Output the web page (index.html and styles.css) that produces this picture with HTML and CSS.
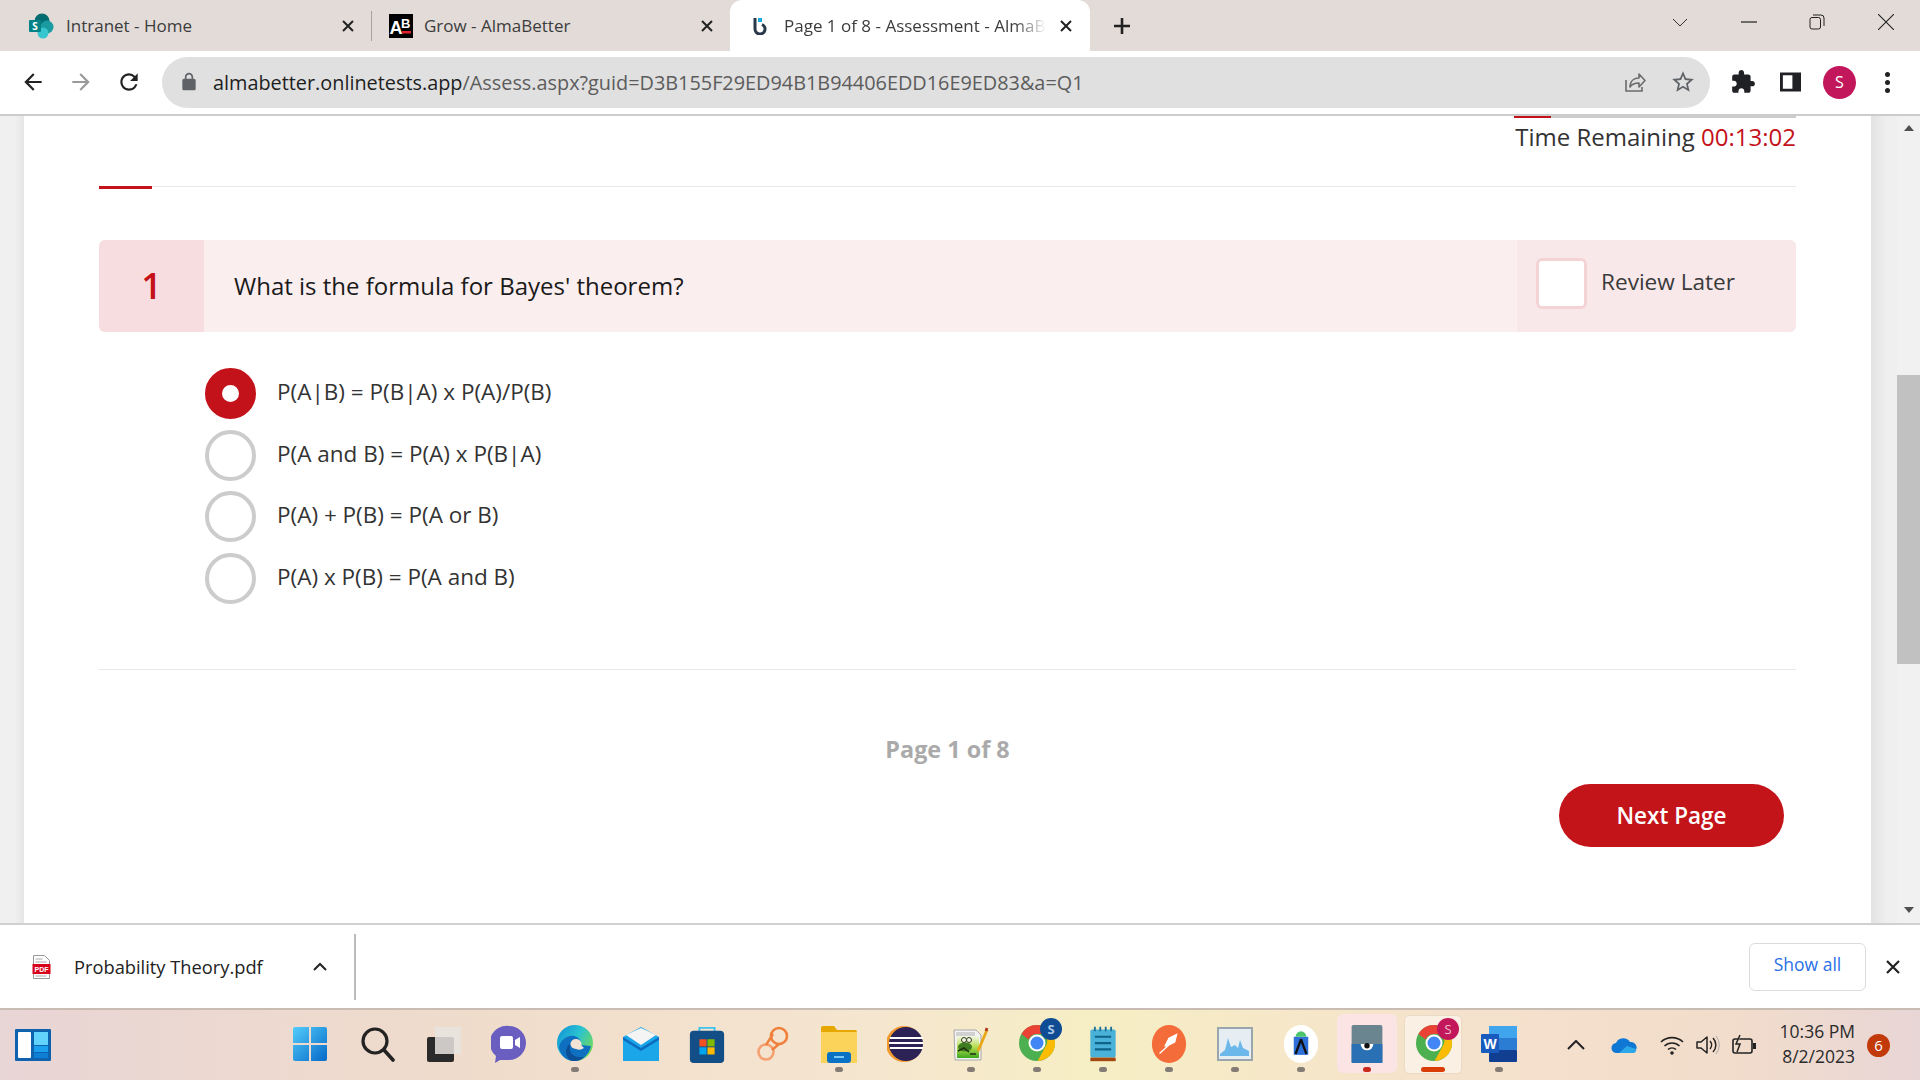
FILE: index.html
```html
<!DOCTYPE html>
<html>
<head>
  <meta charset="utf-8">
  <title>Page 1 of 8 - Assessment - AlmaBetter</title>
  <link rel="stylesheet" href="styles.css">
</head>
<body>
<div class="browser">

  <div class="tabstrip">
    <div class="tab tab-first">
      <svg class="favicon" viewBox="0 0 26 26">
        <circle cx="14" cy="8" r="7.5" fill="#036c70"/>
        <circle cx="19" cy="14" r="6.5" fill="#1a9ba1"/>
        <circle cx="15" cy="20" r="5.5" fill="#37c6d0"/>
        <rect x="1" y="7" width="12" height="12" rx="1" fill="#038387"/>
        <text x="7" y="16.5" class="fav-s">S</text>
      </svg>
      <span class="tab-title">Intranet - Home</span>
      <svg class="tab-close" viewBox="0 0 12 12"><path d="M1 1l10 10M11 1L1 11" stroke="#222" stroke-width="2"/></svg>
    </div>
    <div class="tab-sep"></div>
    <div class="tab tab-second">
      <svg class="favicon" viewBox="0 0 24 24">
        <rect width="24" height="24" fill="#000"/>
        <text x="0.5" y="20" class="fav-a">A</text>
        <text x="12" y="14" class="fav-b">B</text>
        <rect x="13" y="17" width="9" height="2.5" fill="#e0202c"/>
      </svg>
      <span class="tab-title">Grow - AlmaBetter</span>
      <svg class="tab-close" viewBox="0 0 12 12"><path d="M1 1l10 10M11 1L1 11" stroke="#222" stroke-width="2"/></svg>
    </div>
    <div class="tab tab-active">
      <svg class="favicon favicon-small" viewBox="0 0 16 18">
        <path d="M3 1 L3 12 A5 5 0 1 0 10 7.500" fill="none" stroke="#27394a" stroke-width="3"/>
        <rect x="6" y="1" width="4" height="4" fill="#1ea7dc"/>
      </svg>
      <span class="tab-title tab-title-fade">Page 1 of 8 - Assessment - AlmaBetter</span>
      <svg class="tab-close" viewBox="0 0 12 12"><path d="M1 1l10 10M11 1L1 11" stroke="#222" stroke-width="2"/></svg>
    </div>
    <svg class="new-tab" viewBox="0 0 20 20"><path d="M10 2v16M2 10h16" stroke="#222" stroke-width="2.6"/></svg>
    <div class="window-controls">
      <svg viewBox="0 0 16 16"><path d="M1 5l7 7 7-7" fill="none" stroke="#333" stroke-width="1"/></svg>
      <svg viewBox="0 0 16 16"><path d="M0 8h16" stroke="#222" stroke-width="1.2"/></svg>
      <svg viewBox="0 0 16 16"><rect x="1" y="3.5" width="10.5" height="11.5" rx="2" fill="none" stroke="#222"/><path d="M4 1h8a3 3 0 0 1 3 3v8" fill="none" stroke="#222"/></svg>
      <svg viewBox="0 0 16 16"><path d="M0 0l16 16M16 0L0 16" stroke="#222" stroke-width="1.1"/></svg>
    </div>
  </div>

  <div class="toolbar">
    <svg class="nav-icon" viewBox="0 0 24 24"><path fill="#222" d="M20 11H7.83l5.59-5.59L12 4l-8 8 8 8 1.41-1.41L7.83 13H20v-2z"/></svg>
    <svg class="nav-icon" viewBox="0 0 24 24"><path fill="#9a9a9a" d="M12 4l-1.41 1.41L16.17 11H4v2h12.17l-5.58 5.59L12 20l8-8z"/></svg>
    <svg class="nav-icon" viewBox="0 0 24 24"><path fill="#222" d="M17.65 6.35A7.958 7.958 0 0 0 12 4c-4.42 0-7.99 3.58-7.99 8s3.57 8 7.99 8c3.73 0 6.84-2.55 7.73-6h-2.08A5.99 5.99 0 0 1 12 18c-3.31 0-6-2.69-6-6s2.69-6 6-6c1.66 0 3.14.69 4.22 1.78L13 11h7V4l-2.35 2.35z"/></svg>
    <div class="urlbar">
      <svg class="lock" viewBox="0 0 24 24"><path fill="#5f6368" d="M18 8h-1V6c0-2.76-2.24-5-5-5S7 3.24 7 6v2H6c-1.1 0-2 .9-2 2v10c0 1.1.9 2 2 2h12c1.1 0 2-.9 2-2V10c0-1.1-.9-2-2-2zM9 6c0-1.66 1.34-3 3-3s3 1.34 3 3v2H9V6z"/></svg>
      <span class="url"><span class="url-host">almabetter.onlinetests.app</span>/Assess.aspx?guid=D3B155F29ED94B1B94406EDD16E9ED83&amp;a=Q1</span>
      <svg class="share" viewBox="0 0 24 24"><path d="M3 10v11h16v-4" fill="none" stroke="#6b6b6b" stroke-width="1.6"/><path d="M7 17c0-6 4-9 9-9V4l6 6.5-6 6.5v-4c-4 0-7 1-9 4z" fill="none" stroke="#6b6b6b" stroke-width="1.6" stroke-linejoin="round"/></svg>
      <svg class="star" viewBox="0 0 24 24"><path fill="#5f6368" d="M22 9.24l-7.19-.62L12 2 9.19 8.63 2 9.24l5.46 4.73L5.82 21 12 17.27 18.18 21l-1.63-7.03L22 9.24zM12 15.4l-3.76 2.27 1-4.28-3.32-2.88 4.38-.38L12 6.1l1.71 4.04 4.38.38-3.32 2.88 1 4.28L12 15.4z"/></svg>
    </div>
    <svg class="ext-icon" viewBox="0 0 24 24"><path fill="#202124" d="M20.5 11H19V7c0-1.1-.9-2-2-2h-4V3.5C13 2.12 11.88 1 10.5 1S8 2.12 8 3.5V5H4c-1.1 0-1.99.9-1.99 2v3.8H3.5c1.49 0 2.7 1.21 2.7 2.7s-1.21 2.7-2.7 2.7H2V20c0 1.1.9 2 2 2h3.8v-1.5c0-1.49 1.21-2.7 2.7-2.7 1.49 0 2.7 1.21 2.7 2.7V22H17c1.1 0 2-.9 2-2v-4h1.5c1.38 0 2.5-1.12 2.5-2.5S21.88 11 20.5 11z"/></svg>
    <svg class="panel-icon" viewBox="0 0 22 20"><path fill="#202124" fill-rule="evenodd" d="M0 0h22v20H0zM3 3v14h10V3z"/></svg>
    <div class="avatar">S</div>
    <div class="kebab"><i></i><i></i><i></i></div>
  </div>

  <div class="viewport">
    <div class="gutter gutter-left"></div>
    <main class="page">
      <div class="timer-box">
        <div class="timer-bar"><div class="timer-fill"></div></div>
        <div class="timer-text">Time Remaining <span class="timer-value">00:13:02</span></div>
      </div>
      <div class="section-rule"><div class="section-rule-mark"></div></div>

      <div class="question">
        <div class="question-num">1</div>
        <div class="question-text">What is the formula for Bayes' theorem?</div>
        <label class="review">
          <span class="review-box"></span>
          <span class="review-text">Review Later</span>
        </label>
      </div>

      <ul class="options">
        <li class="option selected"><span class="radio"></span><span class="option-text">P(A|B) = P(B|A) x P(A)/P(B)</span></li>
        <li class="option"><span class="radio"></span><span class="option-text">P(A and B) = P(A) x P(B|A)</span></li>
        <li class="option"><span class="radio"></span><span class="option-text">P(A) + P(B) = P(A or B)</span></li>
        <li class="option"><span class="radio"></span><span class="option-text">P(A) x P(B) = P(A and B)</span></li>
      </ul>

      <div class="page-footer">
        <div class="page-count">Page 1 of 8</div>
        <div class="next-row"><button class="next-btn">Next Page</button></div>
      </div>
    </main>
    <div class="gutter gutter-right"></div>
    <div class="scrollbar">
      <div class="scroll-up"></div>
      <div class="scroll-thumb"></div>
      <div class="scroll-down"></div>
    </div>
  </div>

  <div class="downloads">
    <div class="download-item">
      <svg class="pdf-icon" viewBox="0 0 18 24">
        <path d="M1 .5h11l5 5v18H1z" fill="#fff" stroke="#999"/>
        <path d="M3 4h7M3 7h11M3 21h11" stroke="#aaa"/>
        <rect x="0" y="9" width="18" height="10" fill="#d8021a"/>
        <text x="9" y="17" class="pdf-label">PDF</text>
      </svg>
      <span class="download-name">Probability Theory.pdf</span>
      <svg class="download-chevron" viewBox="0 0 14 9"><path d="M1 8l6-6 6 6" fill="none" stroke="#222" stroke-width="2"/></svg>
    </div>
    <div class="download-sep"></div>
    <button class="show-all">Show all</button>
    <svg class="download-close" viewBox="0 0 14 14"><path d="M1 1l12 12M13 1L1 13" stroke="#222" stroke-width="2.2"/></svg>
  </div>

  <div class="taskbar">
    <svg class="widgets" viewBox="0 0 36 32">
      <rect width="36" height="32" rx="1" fill="#0f62ad"/>
      <rect x="3" y="3" width="13" height="26" rx="1" fill="#fff"/>
      <rect x="19" y="3" width="14" height="13" fill="#62d4fb"/>
      <rect x="19" y="17" width="14" height="6" fill="#1aa0ec"/>
      <rect x="19" y="24" width="14" height="5" fill="#0d7fd4"/>
    </svg>

    <div class="task-icons">
      <div class="task">
        <svg viewBox="0 0 36 36">
          <defs><linearGradient id="win" x1="0" y1="0" x2="1" y2="1"><stop offset="0" stop-color="#52cdfb"/><stop offset="1" stop-color="#0668c8"/></linearGradient></defs>
          <path fill="url(#win)" d="M1 3a2 2 0 0 1 2-2h14v16H1zM19 1h14a2 2 0 0 1 2 2v14H19zM1 19h16v16H3a2 2 0 0 1-2-2zM19 19h16v14a2 2 0 0 1-2 2H19z"/>
        </svg>
      </div>
      <div class="task">
        <svg viewBox="0 0 36 36"><circle cx="16" cy="15" r="12" fill="none" stroke="#222" stroke-width="3.2"/><path d="M25 24l9 10" stroke="#222" stroke-width="3.6" stroke-linecap="round"/></svg>
      </div>
      <div class="task">
        <svg viewBox="0 0 36 36"><rect x="2" y="11" width="27" height="25" rx="2" fill="#2b2b2b"/><rect x="10" y="1" width="26" height="27" fill="#e8e4e0" fill-opacity=".85"/></svg>
      </div>
      <div class="task">
        <svg viewBox="0 0 36 38"><path d="M18 1a17 17 0 0 1 0 34H9l-5 3 1-7A17 17 0 0 1 18 1z" fill="#6a5fc0"/><rect x="9" y="11" width="13" height="13" rx="2" fill="#fff"/><path d="M24 15l5-3v11l-5-3z" fill="#fff"/></svg>
      </div>
      <div class="task running">
        <svg viewBox="0 0 36 38">
          <defs><linearGradient id="edge" x1="0" y1="0" x2="1" y2="0.6"><stop offset="0" stop-color="#0f8fd8"/><stop offset=".55" stop-color="#2ac3d0"/><stop offset="1" stop-color="#6fd860"/></linearGradient></defs>
          <circle cx="18" cy="18" r="18" fill="url(#edge)"/>
          <path d="M2 22c2-8 9-12 15-11 5 1 8 5 7 9l10 1c-2 9-9 15-17 15C9 36 3 30 2 22z" fill="#0f6fc0"/>
          <path d="M13 24c0 6 6 9 14 8-3 3-6 4-10 4-5 0-8-5-8-9 0-4 2-7 4-8z" fill="#0b4f96"/>
          <ellipse cx="19" cy="19" rx="5.500" ry="5" fill="#f3e3d4"/>
          <path d="M19 24a8 8 0 0 0 8-1l-4-4z" fill="#f3e3d4"/>
        </svg>
      </div>
      <div class="task">
        <svg viewBox="0 0 36 34"><path d="M0 10L18 0l18 10v24H0z" fill="#1aa6e8"/><path d="M0 10l18 11 18-11v3L18 24 0 13z" fill="#0c6cc0"/><path d="M3 8L18 1l15 7-15 10z" fill="#f4f4f4"/></svg>
      </div>
      <div class="task">
        <svg viewBox="0 0 36 40"><path d="M10 8V3h16v5" fill="none" stroke="#3cc3ee" stroke-width="2"/><rect y="6" width="36" height="34" rx="4" fill="#134f86"/><rect x="10" y="15" width="7.5" height="7.5" fill="#f25022"/><rect x="18.5" y="15" width="7.5" height="7.5" fill="#7fba00"/><rect x="10" y="23.5" width="7.5" height="7.5" fill="#00a4ef"/><rect x="18.5" y="23.5" width="7.5" height="7.5" fill="#ffb900"/></svg>
      </div>
      <div class="task">
        <svg viewBox="0 0 36 38"><circle cx="24" cy="11" r="8" fill="none" stroke="#f0813c" stroke-width="2.6"/><circle cx="11" cy="27" r="7.500" fill="none" stroke="#f4a070" stroke-width="2.6"/><path d="M24 19L17 25M18 9l-7 11" fill="none" stroke="#f0813c" stroke-width="2.400"/></svg>
      </div>
      <div class="task running">
        <svg viewBox="0 0 36 38"><path d="M0 3a2 2 0 0 1 2-2h11l3 4h18a2 2 0 0 1 2 2v31H0z" fill="#e6a800"/><rect y="7" width="36" height="31" fill="#fcd35a"/><rect x="6" y="27" width="24" height="11" rx="3" fill="#0a72c4"/><rect x="13" y="31" width="10" height="2" fill="#7cc8f4"/></svg>
      </div>
      <div class="task">
        <svg viewBox="0 0 36 38"><circle cx="17" cy="19" r="18" fill="#f29a2e"/><circle cx="19" cy="19" r="17" fill="#2c2255"/><path d="M3 13h33M2 18h34M3 23h33" stroke="#fff" stroke-width="2"/></svg>
      </div>
      <div class="task running">
        <svg viewBox="0 0 36 36">
          <defs><linearGradient id="npp" x1="0" y1="0" x2="0" y2="1"><stop offset="0" stop-color="#f4f8e8"/><stop offset=".5" stop-color="#b4dc50"/><stop offset="1" stop-color="#3ea820"/></linearGradient></defs>
          <path d="M1 4h22l5 5v25H2z" fill="#f2f2f2" stroke="#a8a8a8"/>
          <rect x="4" y="10" width="22" height="22" fill="url(#npp)"/>
          <path d="M3 9h19M3 7h19" stroke="#b0b0b0"/>
          <ellipse cx="12" cy="21" rx="7" ry="4.500" fill="#3d7d20"/>
          <circle cx="11" cy="14" r="2.500" fill="#f4f4e0" stroke="#2c3a20"/><circle cx="16" cy="14" r="2.500" fill="#f4f4e0" stroke="#2c3a20"/>
          <path d="M5 25l6-3 5 4M17 28h6" stroke="#20300f" stroke-width="1.500" fill="none"/>
          <path d="M25 25L34 4" stroke="#e8a818" stroke-width="2.800"/>
          <path d="M33 5l1-3" stroke="#b03a20" stroke-width="2.800"/>
        </svg>
      </div>
      <div class="task running">
        <svg class="chrome" viewBox="0 0 44 44">
          <circle cx="18" cy="25" r="18" fill="#4caf50"/>
          <path d="M18 7a18 18 0 0 1 15.6 9H18a9 9 0 0 0-8.4 5.5L2.4 16A18 18 0 0 1 18 7z" fill="#ea4335"/>
          <path d="M33.6 16a18 18 0 0 1-15 27l7.6-14a9 9 0 0 0-1.5-13z" fill="#fbbc05"/>
          <circle cx="18" cy="25" r="8.5" fill="#fff"/><circle cx="18" cy="25" r="6.5" fill="#4285f4"/>
          <circle cx="32" cy="11" r="11" fill="#0f4c94"/>
          <text x="32" y="15.500" class="chrome-badge badge-blue">S</text>
        </svg>
      </div>
      <div class="task running">
        <svg viewBox="0 0 36 42"><rect x="4" y="5" width="28" height="31" rx="2" fill="#4ab2d8"/><path d="M9 2v5M15 2v5M21 2v5M27 2v5" stroke="#1b6f96" stroke-width="2"/><path d="M9 13h18M9 20h18M9 27h18" stroke="#0f6288" stroke-width="2.4"/><rect x="4" y="36" width="28" height="4" fill="#a3480f"/></svg>
      </div>
      <div class="task running">
        <svg viewBox="0 0 36 40"><ellipse cx="18" cy="20" rx="18" ry="20" fill="#f36c39"/><path d="M8 30l11-10M14 22l4-8 8-4-2 8-8 4z" fill="#fff" stroke="#fff" stroke-width="1.4"/></svg>
      </div>
      <div class="task running">
        <svg viewBox="0 0 36 34"><rect x="1" y="1" width="34" height="32" fill="#e6eef4" stroke="#9aa6ae" stroke-width="2"/><path d="M3 27l5-4 3-12 3 9 4-2 3 3 2-8 3 8 6 3v5H3z" fill="#6cb8ea"/></svg>
      </div>
      <div class="task running">
        <svg viewBox="0 0 38 42"><ellipse cx="19" cy="21" rx="19" ry="21" fill="#fff"/><rect x="11" y="13" width="16" height="20" fill="#2f6fd8"/><path d="M13 13a6 6 0 0 1 12 0z" fill="#4cc46c"/><path d="M19 16l-6 16M19 16l6 16" stroke="#111" stroke-width="2.6"/></svg>
      </div>
      <div class="task task-open-app running-red">
        <svg viewBox="0 0 34 42"><rect width="34" height="42" rx="2" fill="#6a8590"/><rect y="21" width="34" height="21" fill="#2a70b4"/><path d="M10 21a7 7 0 0 0 14 0z" fill="#fff"/><circle cx="17" cy="23" r="3" fill="#111"/></svg>
      </div>
      <div class="task task-active running-orange">
        <svg class="chrome" viewBox="0 0 44 44">
          <circle cx="18" cy="25" r="18" fill="#4caf50"/>
          <path d="M18 7a18 18 0 0 1 15.6 9H18a9 9 0 0 0-8.4 5.5L2.4 16A18 18 0 0 1 18 7z" fill="#ea4335"/>
          <path d="M33.6 16a18 18 0 0 1-15 27l7.6-14a9 9 0 0 0-1.5-13z" fill="#fbbc05"/>
          <circle cx="18" cy="25" r="8.5" fill="#fff"/><circle cx="18" cy="25" r="6.5" fill="#4285f4"/>
          <circle cx="32" cy="11" r="11" fill="#c2185b"/>
          <text x="32" y="15.500" class="chrome-badge">S</text>
        </svg>
      </div>
      <div class="task running">
        <svg viewBox="0 0 36 38">
          <rect x="8" y="1" width="28" height="12" fill="#41a5ee"/><rect x="8" y="13" width="28" height="12" fill="#2b7cd3"/><rect x="8" y="25" width="28" height="12" rx="1" fill="#103f91"/>
          <rect y="9" width="18" height="19" rx="1" fill="#185abd"/>
          <text x="9" y="24" class="word-w">W</text>
        </svg>
      </div>
    </div>

    <div class="tray">
      <svg class="tray-caret" viewBox="0 0 18 10"><path d="M1 9l8-8 8 8" fill="none" stroke="#222" stroke-width="2"/></svg>
      <svg class="tray-cloud" viewBox="0 0 26 18"><path d="M6 17a5 5 0 0 1-1-10 8 8 0 0 1 14-1 5.500 5.500 0 0 1 2 11z" fill="#0f78d4"/><path d="M8 17l8-7 9 3a3 3 0 0 1-3 4z" fill="#2ca8e8"/></svg>
      <svg class="tray-wifi" viewBox="0 0 24 20"><path d="M1 7a16 16 0 0 1 22 0M4.500 11a11 11 0 0 1 15 0M8 14.500a6 6 0 0 1 8 0" fill="none" stroke="#222" stroke-width="1.6"/><circle cx="12" cy="18" r="1.800" fill="#222"/></svg>
      <svg class="tray-sound" viewBox="0 0 24 20"><path d="M1 7h4l6-5v16l-6-5H1z" fill="none" stroke="#222" stroke-width="1.500" stroke-linejoin="round"/><path d="M14 6a6 6 0 0 1 0 8M17 3a10 10 0 0 1 0 14" fill="none" stroke="#222" stroke-width="1.500"/><path d="M20 1a14 14 0 0 1 0 18" fill="none" stroke="#aaa" stroke-width="1"/></svg>
      <svg class="tray-battery" viewBox="0 0 26 22"><rect x="2" y="5" width="19" height="14" rx="2" fill="none" stroke="#222" stroke-width="1.600"/><rect x="22" y="9" width="3" height="6" fill="#222"/><path d="M9 1L5 10h4l-3 8" fill="#f3dfcf" stroke="#222" stroke-width="1.500"/></svg>
      <div class="clock"><div>10:36 PM</div><div>8/2/2023</div></div>
      <div class="notif">6</div>
    </div>
  </div>

</div>
</body>
</html>
```

FILE: styles.css
```css
* {
  box-sizing: border-box;
}

body {
  margin: 0;
  font-family: "Open Sans", "Noto Sans", sans-serif;
  color: #333;
}

.browser {
  width: 1920px;
  height: 1080px;
  display: flex;
  flex-direction: column;
  overflow: hidden;
}

/* tab strip */
.tabstrip {
  height: 51px;
  flex: none;
  display: flex;
  align-items: center;
  background-color: #e2dbd8;
}

.tab {
  height: 51px;
  display: flex;
  align-items: center;
  font-size: 17px;
  color: #3c3c3c;
}

.tab-first {
  width: 371px;
  padding-left: 28px;
}

.tab-second {
  width: 358px;
  padding-left: 17px;
}

.tab-active {
  width: 360px;
  padding-left: 22px;
  background-color: #fff;
  border-radius: 12px 12px 0 0;
  position: relative;
}

.favicon {
  width: 26px;
  height: 26px;
  flex: none;
  margin-right: 12px;
}

.tab-second .favicon {
  width: 24px;
  height: 24px;
  margin-right: 11px;
}

.tab-active .favicon-small {
  width: 16px;
  height: 18px;
  margin-right: 16px;
}

.fav-s {
  font: bold 10px "Open Sans", sans-serif;
  fill: #fff;
  text-anchor: middle;
}

.fav-a {
  font: bold 18px "Liberation Sans", sans-serif;
  fill: #fff;
}

.fav-b {
  font: bold 13px "Liberation Sans", sans-serif;
  fill: #fff;
}

.tab-title {
  flex: 1;
  min-width: 0;
  white-space: nowrap;
  overflow: hidden;
}

.tab-title-fade {
  -webkit-mask-image: linear-gradient(to right, #000 88%, transparent 100%);
  mask-image: linear-gradient(to right, #000 88%, transparent 100%);
}

.tab-close {
  width: 12px;
  height: 12px;
  flex: none;
  margin: 0 17px 0 10px;
}

.tab-active .tab-close {
  margin: 0 18px 0 14px;
}

.tab-sep {
  width: 1px;
  height: 30px;
  background-color: #a8a3a0;
  flex: none;
}

.new-tab {
  width: 20px;
  height: 20px;
  margin-left: 22px;
}

.window-controls {
  margin-left: auto;
  display: flex;
  align-items: center;
  gap: 52.5px;
  padding: 0 26.5px 8px 0;
}

.window-controls svg {
  width: 16px;
  height: 16px;
  display: block;
}

/* toolbar */
.toolbar {
  height: 65px;
  flex: none;
  display: flex;
  align-items: center;
  padding-left: 20px;
  padding-bottom: 1px;
  background-color: #fff;
  border-bottom: 2px solid #ccc;
}

.nav-icon {
  width: 26px;
  height: 26px;
  margin-right: 22px;
  flex: none;
}

.urlbar {
  width: 1548px;
  height: 51px;
  margin-left: -2px;
  flex: none;
  display: flex;
  align-items: center;
  padding-left: 17px;
  border-radius: 26px;
  background-color: #e0e0e0;
}

.lock {
  width: 20px;
  height: 20px;
  flex: none;
  margin-right: 14px;
}

.url {
  font-size: 19.85px;
  color: #5c5c5c;
  white-space: nowrap;
}

.url-host {
  color: #1e1e1e;
}

.share {
  width: 24px;
  height: 24px;
  margin-left: auto;
}

.star {
  width: 26px;
  height: 26px;
  margin: 0 14px 0 23px;
}

.ext-icon {
  width: 26px;
  height: 26px;
  margin-left: 20px;
}

.panel-icon {
  width: 21px;
  height: 20px;
  margin-left: 24px;
}

.avatar {
  width: 33px;
  height: 33px;
  margin-left: 22px;
  border-radius: 50%;
  background-color: #c2185b;
  color: #fff;
  font-size: 16px;
  line-height: 33px;
  text-align: center;
}

.kebab {
  margin-left: 29px;
  display: flex;
  flex-direction: column;
  gap: 3px;
}

.kebab i {
  width: 5px;
  height: 5px;
  border-radius: 50%;
  background-color: #222;
}

/* page */
.viewport {
  flex: 1;
  min-height: 0;
  display: flex;
  background-color: #efefef;
}

.gutter-left {
  width: 24px;
  background: linear-gradient(to right, #f0f0f0 60%, #e6e6e6);
}

.gutter-right {
  width: 26px;
  background: linear-gradient(to right, #e2e2e2, #efefef 60%);
}

.page {
  width: 1847px;
  padding: 0 75px;
  background-color: #fff;
}

.scrollbar {
  width: 23px;
  display: flex;
  flex-direction: column;
  align-items: center;
  background-color: #f1f1f1;
}

.scroll-up {
  margin-top: 9px;
  border: 5px solid transparent;
  border-top: 0;
  border-bottom: 6px solid #505050;
  border-left-width: 5.500px;
  border-right-width: 5.500px;
}

.scroll-thumb {
  width: 23px;
  height: 289px;
  margin-top: 244px;
  background-color: #c1c1c1;
}

.scroll-down {
  margin-top: auto;
  margin-bottom: 10px;
  border: 5px solid transparent;
  border-bottom: 0;
  border-top: 6px solid #505050;
  border-left-width: 5.500px;
  border-right-width: 5.500px;
}

.timer-box {
  width: 282px;
  margin-left: auto;
}

.timer-bar {
  height: 2px;
  background-color: #ccc;
}

.timer-fill {
  width: 37px;
  height: 2px;
  background-color: #c4121a;
}

.timer-text {
  margin-top: 2px;
  font-size: 24px;
  line-height: 33px;
  white-space: nowrap;
  text-align: right;
}

.timer-value {
  color: #c4121a;
}

.section-rule {
  height: 1px;
  margin-top: 33px;
  background-color: #e8e8e8;
}

.section-rule-mark {
  width: 53px;
  height: 3px;
  background-color: #c4121a;
}

.question {
  height: 92px;
  margin-top: 53px;
  display: flex;
  align-items: center;
  border-radius: 6px;
  background-color: #faeeef;
  overflow: hidden;
}

.question-num {
  width: 105px;
  height: 100%;
  flex: none;
  display: flex;
  align-items: center;
  justify-content: center;
  padding-bottom: 2px;
  background-color: #f7dde0;
  color: #c4121a;
  font-size: 36px;
  font-weight: 600;
}

.question-text {
  flex: 1;
  padding: 0 0 1px 30px;
  font-size: 24px;
  color: #1a1a1a;
}

.review {
  width: 279px;
  height: 100%;
  flex: none;
  display: flex;
  align-items: center;
  padding: 0 0 6px 19px;
  background-color: #f8e8ea;
}

.review-box {
  width: 51px;
  height: 51px;
  flex: none;
  border: 3px solid #f4d3d5;
  border-radius: 6px;
  background-color: #fff;
}

.review-text {
  margin: 0 0 3px 14px;
  font-size: 22.6px;
  color: #3a3a3a;
}

.options {
  list-style: none;
  margin: 36px 0 0;
  padding: 0 0 0 106px;
  display: flex;
  flex-direction: column;
  gap: 10.67px;
}

.option {
  height: 51px;
  display: flex;
  align-items: center;
}

.radio {
  width: 51px;
  height: 51px;
  flex: none;
  border: 4px solid #ccc;
  border-radius: 50%;
  background-color: #fff;
}

.selected .radio {
  border: 17px solid #c4121a;
}

.option-text {
  margin: -4px 0 0 21px;
  font-size: 22.5px;
  color: #333;
}

.page-footer {
  margin-top: 65px;
  border-top: 1px solid #e8e8e8;
}

.page-count {
  margin-top: 63px;
  font-size: 23.4px;
  font-weight: 700;
  line-height: 33px;
  color: #aaa;
  text-align: center;
}

.next-row {
  display: flex;
  justify-content: flex-end;
  margin-top: 18px;
  padding-right: 12px;
}

.next-btn {
  width: 225px;
  height: 63px;
  border: none;
  border-radius: 32px;
  background-color: #c3141a;
  color: #fff;
  font-family: inherit;
  font-size: 22.5px;
  font-weight: 600;
}

/* download shelf */
.downloads {
  height: 85px;
  flex: none;
  display: flex;
  align-items: center;
  background-color: #fff;
  border-top: 2px solid #d0d0d0;
}

.download-item {
  width: 354px;
  display: flex;
  align-items: center;
  padding-left: 32px;
}

.pdf-icon {
  width: 19px;
  height: 24px;
  flex: none;
}

.download-name {
  margin-left: 23px;
  font-size: 18.3px;
  color: #222;
}

.download-chevron {
  width: 14px;
  height: 9px;
  margin-left: 50px;
}

.pdf-label {
  font: bold 7px "Liberation Sans", sans-serif;
  fill: #fff;
  text-anchor: middle;
}

.download-sep {
  width: 2px;
  height: 66px;
  background-color: #bbb;
  flex: none;
}

.show-all {
  width: 117px;
  height: 48px;
  margin-left: auto;
  padding-bottom: 7px;
  border: 1px solid #dadce0;
  border-radius: 6px;
  background-color: #fff;
  color: #2a6fe6;
  font-family: inherit;
  font-size: 17.5px;
  font-weight: 500;
}

.download-close {
  width: 14px;
  height: 14px;
  margin: 0 20px 0 20px;
}

/* taskbar */
.taskbar {
  height: 72px;
  flex: none;
  display: flex;
  align-items: center;
  background: linear-gradient(to right, #e8d5d5 0%, #f0dccb 25%, #f5e6d0 45%, #f6eec4 57%, #f5e2cc 75%, #f2dccb 90%, #e8d6d6 100%);
  border-top: 2px solid #c9bdb3;
}

.widgets {
  width: 36px;
  height: 32px;
  margin-left: 15px;
  flex: none;
}

.task-icons {
  display: flex;
  align-items: flex-start;
  margin-left: 225px;
}

.task {
  width: 66px;
  height: 70px;
  display: flex;
  align-items: center;
  justify-content: center;
  position: relative;
}

.task:first-child {
  width: 68px;
}

.task svg {
  width: 36px;
  height: 38px;
  margin-bottom: 2px;
}

.task svg.chrome {
  width: 44px;
  height: 44px;
  margin: 0 0 10px 8px;
}

.running::after,
.running-red::after,
.running-orange::after {
  content: "";
  position: absolute;
  bottom: 8px;
  left: 29px;
  width: 8px;
  height: 5px;
  border-radius: 3px;
  background-color: #837b74;
}

.task-open-app {
  width: 60px;
  height: 59px;
  margin: 4px 3px 0;
  border-radius: 6px;
  background-color: #fbe4e3;
}

.task-open-app svg {
  margin-bottom: 0;
}

.running-red::after {
  bottom: 1px;
  left: 26px;
  background-color: #c9281c;
}

.task-active {
  width: 56px;
  height: 57px;
  margin: 6px 5px 0;
  border-radius: 4px;
  background-color: #faf0e4;
  box-shadow: 0 0 2px #d8c8b8;
}

.task-active svg.chrome {
  margin: 0 0 9px 10px;
}

.running-orange::after {
  bottom: 1px;
  left: 16px;
  width: 24px;
  background-color: #db3d06;
}

.chrome-badge {
  font: 13px "Open Sans", sans-serif;
  fill: #f0c0d0;
  text-anchor: middle;
}

.badge-blue {
  font-weight: 700;
  fill: #a8c8e8;
}

.word-w {
  font: bold 14px "Liberation Sans", sans-serif;
  fill: #fff;
  text-anchor: middle;
}

.tray {
  margin-left: auto;
  display: flex;
  align-items: center;
  padding-right: 30px;
}

.tray-caret {
  width: 18px;
  height: 10px;
}

.tray-cloud {
  width: 26px;
  height: 18px;
  margin-left: 26px;
}

.tray-wifi {
  width: 24px;
  height: 20px;
  margin-left: 23px;
}

.tray-sound {
  width: 24px;
  height: 20px;
  margin-left: 12px;
}

.tray-battery {
  width: 26px;
  height: 22px;
  margin-left: 11px;
}

.clock {
  width: 84px;
  margin-left: 14px;
  margin-bottom: 2px;
  font-size: 17.5px;
  line-height: 25px;
  text-align: right;
  white-space: nowrap;
  color: #2b2b2b;
}

.notif {
  width: 23px;
  height: 23px;
  margin-left: 12px;
  border-radius: 50%;
  background-color: #c23a0a;
  color: #fff;
  font-size: 15px;
  line-height: 23px;
  text-align: center;
}
```
